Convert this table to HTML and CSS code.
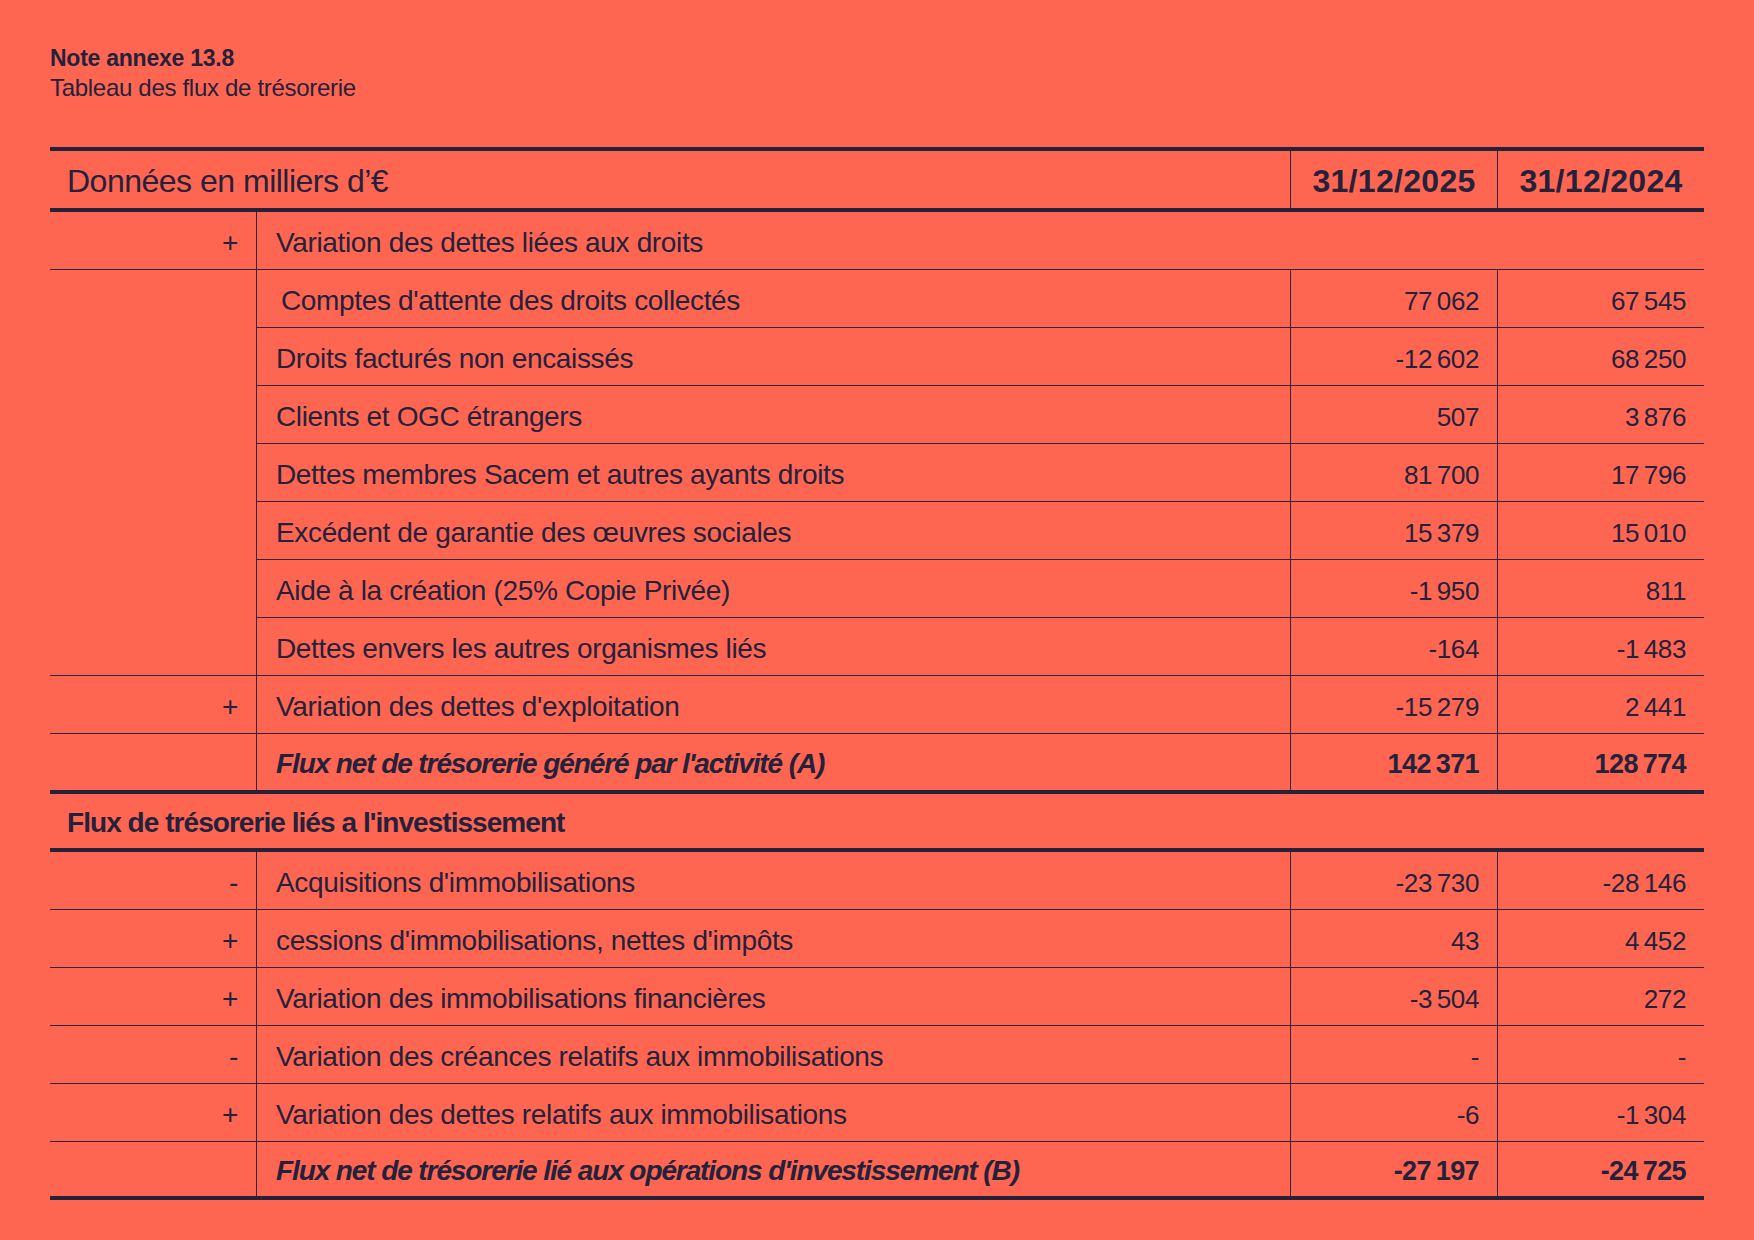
FILE: index.html
```html
<!DOCTYPE html>
<html lang="fr">
<head>
<meta charset="utf-8">
<title>Note annexe 13.8 – Tableau des flux de trésorerie</title>
<link rel="stylesheet" href="styles.css">
</head>
<body>
<div class="page">
  <header class="note">
    <div class="note-title">Note annexe 13.8</div>
    <div class="note-sub">Tableau des flux de trésorerie</div>
  </header>

  <div class="tbl">
    <div class="c head first span2">Données en milliers d’€</div>
    <div class="c head date vl">31/12/2025</div>
    <div class="c head date vl">31/12/2024</div>

    <div class="c sign">+</div>
    <div class="c lbl vl span3">Variation des dettes liées aux droits</div>

    <div class="c blank rs7"></div>
    <div class="c lbl vl indent">Comptes d'attente des droits collectés</div>
    <div class="c num vl">77 062</div>
    <div class="c num vl">67 545</div>

    <div class="c lbl vl">Droits facturés non encaissés</div>
    <div class="c num vl">-12 602</div>
    <div class="c num vl">68 250</div>

    <div class="c lbl vl">Clients et OGC étrangers</div>
    <div class="c num vl">507</div>
    <div class="c num vl">3 876</div>

    <div class="c lbl vl">Dettes membres Sacem et autres ayants droits</div>
    <div class="c num vl">81 700</div>
    <div class="c num vl">17 796</div>

    <div class="c lbl vl">Excédent de garantie des œuvres sociales</div>
    <div class="c num vl">15 379</div>
    <div class="c num vl">15 010</div>

    <div class="c lbl vl">Aide à la création (25% Copie Privée)</div>
    <div class="c num vl">-1 950</div>
    <div class="c num vl">811</div>

    <div class="c lbl vl">Dettes envers les autres organismes liés</div>
    <div class="c num vl">-164</div>
    <div class="c num vl">-1 483</div>

    <div class="c sign">+</div>
    <div class="c lbl vl">Variation des dettes d'exploitation</div>
    <div class="c num vl">-15 279</div>
    <div class="c num vl">2 441</div>

    <div class="c sign thick"></div>
    <div class="c lbl vl total thick">Flux net de trésorerie généré par l'activité (A)</div>
    <div class="c num vl total-num thick">142 371</div>
    <div class="c num vl total-num thick">128 774</div>

    <div class="c section span4 thick">Flux de trésorerie liés a l'investissement</div>

    <div class="c sign">-</div>
    <div class="c lbl vl">Acquisitions d'immobilisations</div>
    <div class="c num vl">-23 730</div>
    <div class="c num vl">-28 146</div>

    <div class="c sign">+</div>
    <div class="c lbl vl">cessions d'immobilisations, nettes d'impôts</div>
    <div class="c num vl">43</div>
    <div class="c num vl">4 452</div>

    <div class="c sign">+</div>
    <div class="c lbl vl">Variation des immobilisations financières</div>
    <div class="c num vl">-3 504</div>
    <div class="c num vl">272</div>

    <div class="c sign">-</div>
    <div class="c lbl vl">Variation des créances relatifs aux immobilisations</div>
    <div class="c num vl">-</div>
    <div class="c num vl">-</div>

    <div class="c sign">+</div>
    <div class="c lbl vl">Variation des dettes relatifs aux immobilisations</div>
    <div class="c num vl">-6</div>
    <div class="c num vl">-1 304</div>

    <div class="c sign thick"></div>
    <div class="c lbl vl total thick">Flux net de trésorerie lié aux opérations d'investissement (B)</div>
    <div class="c num vl total-num thick">-27 197</div>
    <div class="c num vl total-num thick">-24 725</div>
  </div>
</div>
</body>
</html>
```

FILE: styles.css
```css
html, body {
  margin: 0;
  padding: 0;
}

body {
  background: #fe6652;
  color: #24213b;
  font-family: "Liberation Sans", Arial, Helvetica, sans-serif;
  width: 1754px;
  height: 1240px;
  overflow: hidden;
}

.page {
  padding: 44px 50px 0 50px;
}

.note {
  line-height: 29px;
}

.note-title {
  font-size: 23px;
  font-weight: 700;
  letter-spacing: -0.25px;
}

.note-sub {
  font-size: 24px;
  letter-spacing: -0.3px;
}

.tbl {
  margin-top: 45px;
  width: 1654px;
  display: grid;
  grid-template-columns: 206px 1034px 207px 207px;
  grid-template-rows: 61px repeat(9, 58px) 60px 58px repeat(6, 58px);
  border-top: 4px solid #24213b;
}

.c {
  box-sizing: border-box;
  display: flex;
  align-items: center;
  border-bottom: 1px solid #2e2540;
  padding-top: 5px;
  line-height: 1;
  font-size: 28px;
  letter-spacing: -0.35px;
  white-space: nowrap;
}

.vl {
  border-left: 1px solid #2e2540;
}

.span2 { grid-column: span 2; }
.span3 { grid-column: span 3; }
.span4 { grid-column: span 4; }
.rs7 { grid-row: span 7; }

.thick {
  border-bottom: 4px solid #24213b;
  padding-top: 4px;
}

.head {
  border-bottom: 4px solid #24213b;
  font-size: 32px;
  padding-top: 2px;
}

.first {
  padding-left: 17px;
  letter-spacing: -0.5px;
}

.date {
  justify-content: center;
  font-weight: 700;
  letter-spacing: 0.3px;
}

.sign {
  justify-content: flex-end;
  padding-right: 18px;
}

.lbl {
  padding-left: 19px;
}

.indent {
  text-indent: 5px;
}

.num {
  justify-content: flex-end;
  padding-right: 18px;
  font-size: 26px;
  letter-spacing: -0.4px;
  word-spacing: -2px;
}

.total {
  font-weight: 700;
  font-style: italic;
  letter-spacing: -1.1px;
}

.total-num {
  font-weight: 700;
  font-size: 27px;
  letter-spacing: -0.6px;
}

.section {
  padding-left: 17px;
  font-weight: 700;
  letter-spacing: -0.95px;
}
```
